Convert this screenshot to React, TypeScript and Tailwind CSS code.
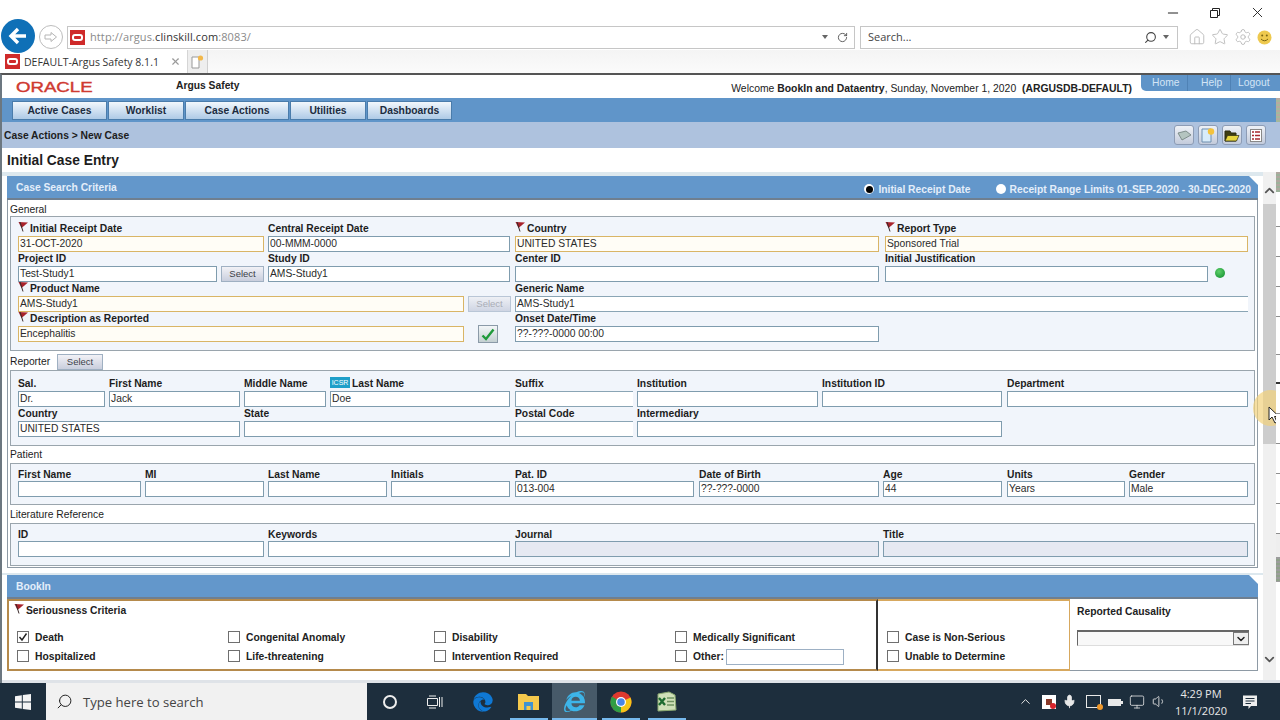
import { ChevronDown, ChevronUp, House, Mic, Minus, Monitor, RotateCw, Search, Settings, Star, Volume1, X } from 'lucide-react';
import { FaEdge, FaInternetExplorer } from 'react-icons/fa';

type Tone = 'plain' | 'req' | 'gray' | 'open';

interface Field {
  label?: string;
  value?: string;
  w: string;
  ml?: string;
  flag?: boolean;
  icsr?: boolean;
  tone?: Tone;
  kind?: 'select' | 'selectOff' | 'check' | 'dot';
}

const toneClass: Record<Tone, string> = {
  plain: 'border-[#7f9cae] bg-white',
  req: 'border-[#d9b566] bg-[#fffdf6]',
  gray: 'border-[#7f9cae] bg-[#e6e9f2]',
  open: 'border-[#8aa5b5] border-r-0 bg-white',
};

const generalRows: Field[][] = [
  [
    { label: 'Initial Receipt Date', value: '31-OCT-2020', w: 'w-[246px]', flag: true, tone: 'req' },
    { label: 'Central Receipt Date', value: '00-MMM-0000', w: 'w-[242px]', ml: 'ml-1' },
    { label: 'Country', value: 'UNITED STATES', w: 'w-[364px]', ml: 'ml-[5px]', flag: true, tone: 'req' },
    { label: 'Report Type', value: 'Sponsored Trial', w: 'w-[363px]', ml: 'ml-[6px]', flag: true, tone: 'req' },
  ],
  [
    { label: 'Project ID', value: 'Test-Study1', w: 'w-[199px]' },
    { w: 'w-[43px]', ml: 'ml-1', kind: 'select' },
    { label: 'Study ID', value: 'AMS-Study1', w: 'w-[242px]', ml: 'ml-1' },
    { label: 'Center ID', w: 'w-[364px]', ml: 'ml-[5px]' },
    { label: 'Initial Justification', w: 'w-[323px]', ml: 'ml-[6px]' },
    { w: 'w-[10px]', ml: 'ml-[7px]', kind: 'dot' },
  ],
  [
    { label: 'Product Name', value: 'AMS-Study1', w: 'w-[446px]', flag: true, tone: 'req' },
    { w: 'w-[43px]', ml: 'ml-1', kind: 'selectOff' },
    { label: 'Generic Name', value: 'AMS-Study1', w: 'w-[733px]', ml: 'ml-1', tone: 'open' },
  ],
  [
    { label: 'Description as Reported', value: 'Encephalitis', w: 'w-[446px]', flag: true, tone: 'req' },
    { w: 'w-[20px]', ml: 'ml-[14px]', kind: 'check' },
    { label: 'Onset Date/Time', value: '??-???-0000 00:00', w: 'w-[364px]', ml: 'ml-[17px]' },
  ],
];

const reporterRows: Field[][] = [
  [
    { label: 'Sal.', value: 'Dr.', w: 'w-[87px]' },
    { label: 'First Name', value: 'Jack', w: 'w-[131px]', ml: 'ml-1' },
    { label: 'Middle Name', w: 'w-[82px]', ml: 'ml-1' },
    { label: 'Last Name', value: 'Doe', w: 'w-[180px]', ml: 'ml-1', icsr: true },
    { label: 'Suffix', w: 'w-[118px]', ml: 'ml-[5px]', tone: 'open' },
    { label: 'Institution', w: 'w-[181px]', ml: 'ml-1' },
    { label: 'Institution ID', w: 'w-[180px]', ml: 'ml-1' },
    { label: 'Department', w: 'w-[241px]', ml: 'ml-[5px]' },
  ],
  [
    { label: 'Country', value: 'UNITED STATES', w: 'w-[222px]' },
    { label: 'State', w: 'w-[266px]', ml: 'ml-1' },
    { label: 'Postal Code', w: 'w-[118px]', ml: 'ml-[5px]', tone: 'open' },
    { label: 'Intermediary', w: 'w-[365px]', ml: 'ml-1' },
  ],
];

const patientRow: Field[] = [
  { label: 'First Name', w: 'w-[123px]' },
  { label: 'MI', w: 'w-[119px]', ml: 'ml-1' },
  { label: 'Last Name', w: 'w-[119px]', ml: 'ml-1' },
  { label: 'Initials', w: 'w-[119px]', ml: 'ml-1' },
  { label: 'Pat. ID', value: '013-004', w: 'w-[179px]', ml: 'ml-[5px]' },
  { label: 'Date of Birth', value: '??-???-0000', w: 'w-[180px]', ml: 'ml-[5px]' },
  { label: 'Age', value: '44', w: 'w-[119px]', ml: 'ml-1' },
  { label: 'Units', value: 'Years', w: 'w-[118px]', ml: 'ml-[5px]' },
  { label: 'Gender', value: 'Male', w: 'w-[119px]', ml: 'ml-1' },
];

const literatureRow: Field[] = [
  { label: 'ID', w: 'w-[246px]' },
  { label: 'Keywords', w: 'w-[242px]', ml: 'ml-1' },
  { label: 'Journal', w: 'w-[364px]', ml: 'ml-[5px]', tone: 'gray' },
  { label: 'Title', w: 'w-[365px]', ml: 'ml-1', tone: 'gray' },
];

function Flag() {
  return (
    <svg width="11" height="12" viewBox="0 0 11 12" className="mr-[1px] -mt-[4px] shrink-0">
      <path d="M0.5 1 L10 1.5 L6.5 4.5 L3.5 7 Z" fill="#a8232c" />
      <path d="M2 1 L5 10.5" stroke="#3a2a2a" strokeWidth="1" />
    </svg>
  );
}

function SelectButton({ disabled = false }: { disabled?: boolean }) {
  return (
    <div
      className={`h-[16px] w-full flex items-center justify-center border text-[9.5px] bg-gradient-to-b ${
        disabled
          ? 'border-[#b9c6d6] from-[#eef0f5] to-[#cfd5e3] text-[#a9adb6]'
          : 'border-[#9fb0c2] from-[#f2f2f6] to-[#c9cedd] text-[#3c4148]'
      }`}
    >
      Select
    </div>
  );
}

function FieldCell({ f, labelPad }: { f: Field; labelPad: string }) {
  const tone = f.tone ?? 'plain';
  return (
    <div className={`${f.w} ${f.ml ?? ''} shrink-0 flex flex-col`}>
      <div className={`h-[14px] ${labelPad} flex items-center whitespace-nowrap font-bold text-[#1d1d1d]`}>
        {f.flag && <Flag />}
        {f.icsr && (
          <span className="mr-[2px] -mt-[4px] w-[20px] h-[11px] text-center leading-[11px] bg-[#1f9fc9] text-white text-[7px] font-normal">
            ICSR
          </span>
        )}
        {f.label}
      </div>
      {f.kind === 'select' && <SelectButton />}
      {f.kind === 'selectOff' && <SelectButton disabled />}
      {f.kind === 'dot' && <div className="mt-[2px] w-[10px] h-[10px] rounded-full bg-[radial-gradient(circle_at_40%_35%,#5fd06a,#0b8a2a)]" />}
      {f.kind === 'check' && (
        <div className="-mt-[1px] h-[18px] w-[20px] flex items-center justify-center border border-[#8b9aa8] bg-gradient-to-b from-[#f3f6f8] to-[#c4d0d2]">
          <svg width="14" height="13" viewBox="0 0 14 13">
            <path d="M1.5 7.5 L5 11 L12.5 1.5" fill="none" stroke="#1f9a3a" strokeWidth="2.4" />
          </svg>
        </div>
      )}
      {!f.kind && (
        <div className={`h-[16px] border ${toneClass[tone]} px-[1px] leading-[13px] whitespace-nowrap overflow-hidden text-[#2a2a2a]`}>
          {f.value}
        </div>
      )}
    </div>
  );
}

function FieldRow({ fields, labelPad = '' }: { fields: Field[]; labelPad?: string }) {
  return (
    <div className="flex">
      {fields.map((f, i) => (
        <FieldCell key={i} f={f} labelPad={labelPad} />
      ))}
    </div>
  );
}

function PanelHeader({ title, children }: { title: string; children?: React.ReactNode }) {
  return (
    <div className="h-[24px] pt-[2px] flex items-center justify-between pl-[9px] pr-[7px] bg-[#6397cb] border-b-2 border-[#6f7f90] [clip-path:polygon(0_0,calc(100%-9px)_0,100%_9px,100%_100%,0_100%)] font-bold text-[#e3eefa]">
      <span>{title}</span>
      {children}
    </div>
  );
}

function Radio({ on, label, ml }: { on?: boolean; label: string; ml: string }) {
  return (
    <span className={`flex items-center ${ml}`}>
      <span className="w-[10px] h-[10px] rounded-full bg-white flex items-center justify-center mr-[4px] -mt-[1px]">
        {on && <span className="w-[7px] h-[7px] rounded-full bg-black" />}
      </span>
      {label}
    </span>
  );
}

function Check({ label, checked, w }: { label: string; checked?: boolean; w: string }) {
  return (
    <div className={`${w} shrink-0 flex items-center`}>
      <span className="w-[12px] h-[12px] border border-[#6f6f6f] bg-white flex items-center justify-center mr-[6px] -mt-[2px]">
        {checked && (
          <svg width="10" height="10" viewBox="0 0 10 10">
            <path d="M1.5 5 L4 8 L8.5 1.5" fill="none" stroke="#222" strokeWidth="1.4" />
          </svg>
        )}
      </span>
      <span className="font-bold text-[#222]">{label}</span>
    </div>
  );
}

function ChromeBar() {
  return (
    <div className="h-[73px] shrink-0 flex flex-col font-['Open_Sans',sans-serif] text-[#444]">
      <div className="h-[25px] flex items-center justify-end pr-[14px]">
        <Minus className="w-[16px] h-[16px] text-[#222]" strokeWidth={1.5} />
        <svg width="12" height="12" viewBox="0 0 12 12" className="ml-[28px]">
          <path d="M1.5 3.5 H8.5 V10.5 H1.5 Z M3.5 3.5 V1.5 H10.5 V8.5 H8.5" fill="none" stroke="#222" strokeWidth="1" />
        </svg>
        <X className="ml-[28px] w-[17px] h-[17px] text-[#222]" strokeWidth={1.3} />
      </div>
      <div className="h-[24px] flex items-center relative">
        <div className="absolute left-[1px] top-[-6px] w-[34px] h-[34px] rounded-full bg-[#0f70b7] flex items-center justify-center">
          <svg width="20" height="18" viewBox="0 0 20 18">
            <path d="M18 9 H4 M10 2 L3 9 L10 16" fill="none" stroke="white" strokeWidth="3.4" />
          </svg>
        </div>
        <div className="ml-[39px] w-[24px] h-[24px] rounded-full border border-[#bdbdbd] flex items-center justify-center">
          <svg width="14" height="12" viewBox="0 0 14 12">
            <path d="M1 4 H7 V1.5 L12.5 6 L7 10.5 V8 H1 Z" fill="none" stroke="#b5b5b5" strokeWidth="1" />
          </svg>
        </div>
        <div className="ml-[4px] w-[788px] h-[23px] border border-[#c6c6c6] flex items-center">
          <span className="ml-[2px] w-[15px] h-[15px] bg-[#cf2a2a] flex items-center justify-center">
            <span className="w-[11px] h-[7px] rounded-[3px] border-2 border-white" />
          </span>
          <span className="ml-[5px] text-[11px] text-[#8a8a8a] tracking-[0.1px]">
            http://argus.<span className="text-[#333]">clinskill.com</span>:8083/
          </span>
          <span className="ml-auto mr-[6px] flex items-center gap-[9px]">
            <span className="border-x-[3px] border-t-[4px] border-x-transparent border-t-[#666]" />
            <RotateCw className="w-[11px] h-[11px] text-[#555]" strokeWidth={2} />
          </span>
        </div>
        <div className="ml-[5px] w-[318px] h-[23px] border border-[#c6c6c6] flex items-center pl-[7px]">
          <span className="text-[11px] text-[#444]">Search...</span>
          <span className="ml-auto mr-[8px] flex items-center gap-[6px]">
            <Search className="w-[13px] h-[13px] text-[#444] -scale-x-100" strokeWidth={2} />
            <span className="border-x-[3px] border-t-[4px] border-x-transparent border-t-[#666]" />
          </span>
        </div>
        <div className="ml-[10px] flex items-center gap-[5px]">
          <House className="w-[18px] h-[18px] text-[#b9b9b9]" strokeWidth={1.2} />
          <Star className="w-[18px] h-[18px] text-[#b9b9b9]" strokeWidth={1.2} />
          <Settings className="w-[18px] h-[18px] text-[#b9b9b9]" strokeWidth={1.2} />
          <svg width="15" height="15" viewBox="0 0 15 15">
            <circle cx="7.5" cy="7.5" r="7" fill="#eec94e" />
            <circle cx="5.2" cy="5.5" r="1" fill="#7a6412" />
            <circle cx="9.8" cy="5.5" r="1" fill="#7a6412" />
            <path d="M4 9 Q7.5 12.5 11 9" fill="none" stroke="#7a6412" strokeWidth="1" />
          </svg>
        </div>
      </div>
      <div className="h-[23px] mt-[1px] flex bg-gradient-to-b from-[#f4f4f4] to-[#fbfbfb]">
        <div className="w-[188px] bg-white border-r border-[#d5d5d5] flex items-center pl-[5px] text-[10.5px] text-[#333]">
          <span className="w-[15px] h-[15px] bg-[#cf2a2a] flex items-center justify-center shrink-0">
            <span className="w-[11px] h-[7px] rounded-[3px] border-2 border-white" />
          </span>
          <span className="ml-[4px] whitespace-nowrap">DEFAULT-Argus Safety 8.1.1</span>
          <X className="ml-auto mr-[6px] w-[11px] h-[11px] text-[#9a9a9a]" strokeWidth={2.5} />
        </div>
        <div className="w-[20px] border-r border-[#cfcfcf] bg-[#eeeeee] flex items-center justify-center">
          <svg width="13" height="14" viewBox="0 0 13 14">
            <path d="M1 2 H8 V13 H1 Z" fill="#fff" stroke="#999" />
            <circle cx="9.5" cy="3" r="2.6" fill="#f2b84b" />
          </svg>
        </div>
      </div>
    </div>
  );
}

function PageHeader() {
  return (
    <div className="h-[23px] flex items-start bg-white">
      <span className="ml-[14px] mt-[5px] w-[77px] text-[14px] leading-[14px] text-[#cf3a31] font-normal [-webkit-text-stroke:0.4px_#cf3a31] origin-left scale-x-[1.33] shrink-0">
        ORACLE
      </span>
      <span className="ml-[83px] mt-[4px] font-bold text-[#222]">Argus Safety</span>
      <span className="ml-auto mt-[7px] whitespace-nowrap text-[#222] text-[10.4px]">
        Welcome <b>BookIn and Dataentry</b>, Sunday, November 1, 2020&nbsp; <b>(ARGUSDB-DEFAULT)</b>
      </span>
      <div className="ml-[9px] w-[139px] h-[16px] bg-[#5f94c8] rounded-bl-[5px] flex text-[#d4e5f6]">
        <span className="w-[47px] pl-[11px] border-r border-[#4f82b5] leading-[15px]">Home</span>
        <span className="w-[43px] pl-[13px] border-r border-[#4f82b5] leading-[15px]">Help</span>
        <span className="pl-[7px] leading-[15px]">Logout</span>
      </div>
    </div>
  );
}

const navItems = [
  { label: 'Active Cases', w: 'w-[95px]' },
  { label: 'Worklist', w: 'w-[76px]' },
  { label: 'Case Actions', w: 'w-[104px]' },
  { label: 'Utilities', w: 'w-[76px]' },
  { label: 'Dashboards', w: 'w-[85px]' },
];

function NavBar() {
  return (
    <div className="h-[24px] flex items-center bg-[#6095c9] pl-[10px]">
      <div className="flex gap-[1px]">
        {navItems.map((n) => (
          <div
            key={n.label}
            className={`${n.w} h-[19px] pt-[2px] flex items-center justify-center border border-[#4a7cab] bg-gradient-to-b from-[#f2f7fc] to-[#aecae6] font-bold text-[#1c2c40]`}
          >
            {n.label}
          </div>
        ))}
      </div>
      <div className="ml-auto w-[4px] h-full bg-[repeating-linear-gradient(180deg,#b8a9a0_0,#b8a9a0_2px,#a5b89c_2px,#a5b89c_4px)]" />
    </div>
  );
}

function ToolButton({ children }: { children: React.ReactNode }) {
  return (
    <div className="w-[20px] h-[20px] rounded-[3px] border border-[#8d9cb5] bg-gradient-to-b from-[#eef1f6] to-[#c3cbdb] flex items-center justify-center">
      {children}
    </div>
  );
}

function Breadcrumb() {
  return (
    <div className="h-[26px] flex items-center bg-[#aec2de] pl-[2px] font-bold text-[#1d1d1d]">
      <span className="mt-[2px]">Case Actions &gt; New Case</span>
      <div className="ml-auto mr-[14px] flex gap-[4px]">
        <ToolButton>
          <svg width="15" height="11" viewBox="0 0 15 11">
            <path d="M1 3 L9 1 L14 5 L5 10 Z" fill="#b4c4c0" stroke="#6d7e7a" strokeWidth="0.8" />
          </svg>
        </ToolButton>
        <ToolButton>
          <svg width="14" height="15" viewBox="0 0 14 15">
            <path d="M1 1 H10 V14 H1 Z" fill="#d8ecfa" stroke="#6f8fb0" />
            <circle cx="10" cy="3.5" r="3.2" fill="#f4c23c" />
          </svg>
        </ToolButton>
        <ToolButton>
          <svg width="16" height="13" viewBox="0 0 16 13">
            <path d="M1 2 H6 L7 4 H12 V12 H1 Z" fill="#3d3d12" stroke="#2c2c10" />
            <path d="M1 12 L3.5 6.5 H15 L12.5 12 Z" fill="#e6d53f" stroke="#2c2c10" strokeWidth="0.7" />
          </svg>
        </ToolButton>
        <ToolButton>
          <svg width="12" height="13" viewBox="0 0 12 13">
            <rect x="0.5" y="0.5" width="11" height="12" fill="#fff" stroke="#888" />
            <path d="M2 3 H4 M5 3 H10 M2 6.5 H4 M5 6.5 H10 M2 10 H4 M5 10 H10" stroke="#a8282c" strokeWidth="1.3" />
          </svg>
        </ToolButton>
      </div>
    </div>
  );
}

function CaseSearchPanel() {
  return (
    <div className="w-[1251px] ml-[5px]">
      <PanelHeader title="Case Search Criteria">
        <div className="flex mt-[3px]">
          <Radio on label="Initial Receipt Date" ml="" />
          <Radio label="Receipt Range Limits 01-SEP-2020 - 30-DEC-2020" ml="ml-[25px]" />
        </div>
      </PanelHeader>
      <div className="border-x border-b border-[#8e9aa5] px-[2px] pb-[2px] h-[368px]">
        <div className="h-[16px] pt-[3px] flex items-center text-[#1d1d1d]">General</div>
        <div className="border border-[#9aa5ad] bg-[#f1f5fb] pl-[7px] pt-[5px] pb-[7px]">
          {generalRows.map((r, i) => (
            <FieldRow key={i} fields={r} />
          ))}
        </div>
        <div className="h-[19px] pt-[2px] flex items-center text-[#1d1d1d]">
          Reporter
          <div className="ml-[7px] w-[46px]">
            <SelectButton />
          </div>
        </div>
        <div className="border border-[#9aa5ad] bg-[#f1f5fb] pl-[7px] pt-[6px] pb-[8px]">
          {reporterRows.map((r, i) => (
            <FieldRow key={i} fields={r} />
          ))}
        </div>
        <div className="h-[17px] pt-[1px] flex items-center text-[#1d1d1d]">Patient</div>
        <div className="border border-[#9aa5ad] bg-[#f1f5fb] pl-[7px] pt-[3px] pb-[7px]">
          <FieldRow fields={patientRow} labelPad="pt-[2px]" />
        </div>
        <div className="h-[18px] pt-[2px] flex items-center text-[#1d1d1d]">Literature Reference</div>
        <div className="border border-[#9aa5ad] bg-[#f1f5fb] pl-[7px] pt-[3px] pb-[8px]">
          <FieldRow fields={literatureRow} labelPad="pt-[2px]" />
        </div>
      </div>
    </div>
  );
}

function BookInPanel() {
  return (
    <div className="w-[1251px] ml-[5px]">
      <PanelHeader title="BookIn" />
      <div className="h-[72px] flex">
        <div className="w-[871px] shrink-0 border-y-2 border-l-2 border-y-[#b58a4c] border-l-[#b58a4c] border-r-2 border-r-[#333] pl-[8px]">
          <div className="h-[20px] flex items-center font-bold text-[#222] -ml-[3px]">
            <Flag />
            Seriousness Criteria
          </div>
          <div className="mt-[7px] h-[19px] flex items-center">
            <Check w="w-[211px]" checked label="Death" />
            <Check w="w-[206px]" label="Congenital Anomaly" />
            <Check w="w-[241px]" label="Disability" />
            <Check w="w-[170px]" label="Medically Significant" />
          </div>
          <div className="h-[19px] flex items-center">
            <Check w="w-[211px]" label="Hospitalized" />
            <Check w="w-[206px]" label="Life-threatening" />
            <Check w="w-[241px]" label="Intervention Required" />
            <Check w="w-[51px]" label="Other:" />
            <div className="w-[118px] h-[16px] border border-[#9db0c4] bg-white" />
          </div>
        </div>
        <div className="w-[192px] shrink-0 border-y-2 border-r border-[#d7a85e] pl-[9px] pt-[27px]">
          <div className="h-[19px] flex items-center">
            <Check w="w-[170px]" label="Case is Non-Serious" />
          </div>
          <div className="h-[19px] flex items-center">
            <Check w="w-[170px]" label="Unable to Determine" />
          </div>
        </div>
        <div className="flex-1 border-r border-b border-[#8e9aa5] pl-[7px] pr-[8px]">
          <div className="h-[25px] flex items-center font-bold text-[#222]">Reported Causality</div>
          <div className="mt-[6px] h-[16px] flex justify-end border-t-2 border-l border-[#666] bg-[#f8f8f8] border-b border-b-[#ddd]">
            <div className="w-[16px] h-[13px] border border-[#777] bg-[#eee] flex items-center justify-center">
              <ChevronDown className="w-[12px] h-[12px] text-[#222]" strokeWidth={3} />
            </div>
          </div>
        </div>
      </div>
    </div>
  );
}

function Scrollbar() {
  return (
    <div className="w-[13px] shrink-0 flex flex-col items-center bg-[#f0f0f0] relative">
      <div className="h-[32px] pt-[4px] flex items-center">
        <ChevronUp className="w-[15px] h-[15px] text-[#555]" strokeWidth={2.8} />
      </div>
      <div className="w-full h-[240px] bg-[#cdcdcd]" />
      <div className="mt-[208px] h-[14px] flex items-center">
        <ChevronDown className="w-[15px] h-[15px] text-[#555]" strokeWidth={2.8} />
      </div>
    </div>
  );
}

function SideStrip() {
  const ruled = 'border-b border-[#8f8f8f]';
  return (
    <div className="w-[4px] shrink-0 flex flex-col bg-white">
      <div className="h-[20px] bg-[repeating-linear-gradient(180deg,#b0a79f_0,#b0a79f_2px,#9cb19a_2px,#9cb19a_4px)]" />
      <div className={`h-[35px] ${ruled}`} />
      <div className={`h-[30px] ${ruled}`} />
      <div className={`h-[30px] ${ruled}`} />
      <div className={`h-[30px] ${ruled}`} />
      <div className={`h-[38px] ${ruled}`} />
      <div className="h-[29px] border-b-2 border-[#333]" />
      <div className={`h-[30px] ${ruled}`} />
      <div className={`h-[30px] ${ruled}`} />
      <div className={`h-[30px] ${ruled}`} />
      <div className={`h-[30px] ${ruled}`} />
      <div className={`h-[30px] ${ruled}`} />
      <div className="h-[23px] bg-[#eeeeee]" />
      <div className="h-[25px] bg-[repeating-linear-gradient(180deg,#9c9c9c_0,#9c9c9c_2px,#8fa08a_2px,#8fa08a_4px)]" />
      <div className="flex-1" />
    </div>
  );
}

function ChromeLogo() {
  return (
    <svg width="22" height="22" viewBox="0 0 22 22">
      <circle cx="11" cy="11" r="10.5" fill="#e0392e" />
      <path d="M11 11 L1.8 16.2 A10.5 10.5 0 0 0 11 21.5 Z" fill="#2f9e44" />
      <path d="M11 11 L1.8 16.2 A10.5 10.5 0 0 1 2 5.5 Z" fill="#2f9e44" />
      <path d="M11 11 L20.5 6.5 A10.5 10.5 0 0 1 11 21.5 Z" fill="#f5c518" />
      <circle cx="11" cy="11" r="5" fill="#fff" />
      <circle cx="11" cy="11" r="3.8" fill="#4a86e8" />
    </svg>
  );
}

function Taskbar() {
  const running = 'h-full relative flex items-center justify-center';
  const line = 'absolute left-0 right-0 bottom-0 h-[2px] bg-[#76b9ed]';
  return (
    <div className="h-[37px] shrink-0 flex items-center bg-[#1d2e3d] font-['Open_Sans',sans-serif]">
      <div className="w-[46px] flex justify-center">
        <svg width="16" height="16" viewBox="0 0 16 16">
          <path d="M0 2.2 L6.8 1.2 V7.5 H0 Z M7.8 1 L16 0 V7.5 H7.8 Z M0 8.5 H6.8 V14.8 L0 13.8 Z M7.8 8.5 H16 V16 L7.8 15 Z" fill="#f4f4f4" />
        </svg>
      </div>
      <div className="w-[321px] h-full bg-[#f1f1f1] flex items-center pl-[10px] text-[13.1px] text-[#444]">
        <Search className="w-[17px] h-[17px] text-[#222] -scale-x-100" strokeWidth={1.4} />
        <span className="ml-[10px]">Type here to search</span>
      </div>
      <div className="ml-[16px] w-[14px] h-[14px] rounded-full border-2 border-[#eee]" />
      <div className="ml-[30px] w-[16px] flex justify-center">
        <svg width="16" height="14" viewBox="0 0 16 14">
          <path d="M0.5 3.5 H10.5 V10.5 H0.5 Z M12.5 2 V12 M15 2 V12 M2 1 H9 M2 13 H9" fill="none" stroke="#eee" strokeWidth="1" />
        </svg>
      </div>
      <div className="ml-[22px] w-[36px] h-full flex items-center justify-center">
        <FaEdge className="w-[20px] h-[20px] text-[#0f78d4]" />
      </div>
      <div className={`ml-[9px] w-[38px] ${running}`}>
        <svg width="21" height="18" viewBox="0 0 21 18" className="-ml-[2px]">
          <path d="M0 1 H8 L10 3 H21 V17 H0 Z" fill="#f5c94c" />
          <path d="M6 9 H15 V17 H12.5 V13 H8.5 V17 H6 Z" fill="#3f93d2" />
        </svg>
        <div className={line} />
      </div>
      <div className={`ml-[4px] w-[45px] bg-[#475a69] ${running}`}>
        <div className="relative w-[21px] h-[21px]">
          <FaInternetExplorer className="w-[21px] h-[21px] text-[#3db4e8]" />
        </div>
        <div className={line} />
      </div>
      <div className={`ml-[5px] w-[38px] ${running}`}>
        <ChromeLogo />
        <div className={line} />
      </div>
      <div className={`ml-[8px] w-[38px] ${running}`}>
        <svg width="22" height="21" viewBox="0 0 22 21" className="-ml-[2px]">
          <path d="M3 3 L14 1 L20 4 L21 19 L3 20 Z" fill="#cfe0b8" stroke="#8aa870" />
          <path d="M4 7 L10 14 M10 7 L4 14" stroke="#1d6b2f" strokeWidth="2.4" />
          <path d="M12 7 H19 M12 10.5 H19 M12 14 H19" stroke="#6f9260" strokeWidth="1.4" />
        </svg>
        <div className={line} />
      </div>
      <div className="ml-auto flex items-center text-[#e8e8e8]">
        <ChevronUp className="w-[15px] h-[15px]" strokeWidth={1.6} />
        <div className="ml-[9px] w-[14px] h-[14px] bg-white relative flex items-center justify-center">
          <span className="w-[6px] h-[6px] bg-[#8a3a2a]" />
          <span className="absolute right-0 bottom-0 w-[6px] h-[6px] rounded-full bg-[#d8242c]" />
        </div>
        <Mic className="ml-[6px] w-[15px] h-[15px] fill-[#e8e8e8]" strokeWidth={1.4} />
        <div className="ml-[9px] w-[15px] h-[13px] border border-[#e8e8e8] relative">
          <span className="absolute -right-[3px] -bottom-[3px] w-[6px] h-[6px] rounded-full bg-[#f0982a]" />
        </div>
        <svg width="16" height="10" viewBox="0 0 16 10" className="ml-[6px]">
          <rect x="1" y="2" width="13" height="7" fill="#e8e8e8" />
          <rect x="14" y="4" width="2" height="3" fill="#e8e8e8" />
        </svg>
        <Monitor className="ml-[6px] w-[16px] h-[16px]" strokeWidth={1.2} />
        <Volume1 className="ml-[7px] w-[15px] h-[15px]" strokeWidth={1.4} />
        <div className="ml-[4px] w-[60px] flex flex-col items-center text-[11px] leading-[17px] whitespace-nowrap">
          <span>4:29 PM</span>
          <span>11/1/2020</span>
        </div>
        <svg width="16" height="16" viewBox="0 0 16 16" className="ml-[11px] mr-[22px]">
          <path d="M1 1.5 H15 V12 H9 L6.5 15 V12 H1 Z" fill="#eee" />
          <path d="M3.5 4.5 H12.5 M3.5 7 H12.5 M3.5 9.5 H9" stroke="#1d2e3d" strokeWidth="1" />
        </svg>
      </div>
    </div>
  );
}

export default function App() {
  return (
    <div className="w-[1280px] h-[720px] overflow-hidden relative flex flex-col bg-white font-['Liberation_Sans',Arial,sans-serif] text-[10.3px] leading-[14px]">
      <ChromeBar />
      <div className="flex-1 min-h-0 flex flex-col border-t-2 border-[#555] border-l-2 border-l-[#6c7780]">
        <PageHeader />
        <NavBar />
        <Breadcrumb />
        <div className="h-[24px] pt-[2px] shrink-0 flex items-center pl-[5px] text-[13.8px] font-bold text-[#1d1d1d]">Initial Case Entry</div>
        <div className="flex-1 min-h-0 flex">
          <div className="flex-1 min-w-0 flex flex-col">
            <div className="h-[4px] bg-[#dde8ee]" />
            <CaseSearchPanel />
            <div className="h-[5px]" />
            <div className="h-[2px] bg-[#dde8ee]" />
            <BookInPanel />
          </div>
          <Scrollbar />
          <SideStrip />
        </div>
        <div className="h-[3px] shrink-0 bg-[#dfe3e8]" />
      </div>
      <Taskbar />
      {/* recording highlight + mouse pointer */}
      <div className="absolute left-[1250px] top-[385px] w-[26px] h-[45px] overflow-hidden">
        <div className="absolute left-[3px] top-[5px] w-[36px] h-[36px] rounded-full bg-[#f2d17c]/70" />
        <svg width="12" height="18" viewBox="0 0 12 18" className="absolute left-[18px] top-[21px]">
          <path d="M1 1 V14 L4 11 L7 17 L9 16 L6.5 10.5 H11 Z" fill="#fff" stroke="#222" strokeWidth="1" />
        </svg>
      </div>
    </div>
  );
}
